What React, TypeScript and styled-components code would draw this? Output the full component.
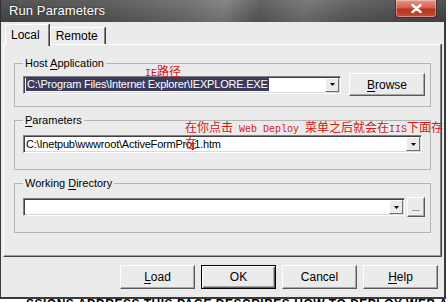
import React from "react";
import styled, { createGlobalStyle, css } from "styled-components";

const GlobalStyle = createGlobalStyle`
  html, body { margin: 0; padding: 0; background: #ffffff; }
  body { width: 448px; height: 302px; overflow: hidden; }
  * { box-sizing: border-box; }
`;

const Page = styled.div`
  position: relative;
  width: 448px;
  height: 302px;
  overflow: hidden;
  background: #ffffff;
  font-family: "Liberation Sans", Arial, sans-serif;
  font-size: 11px;
  color: #000;
`;

const Dialog = styled.div`
  width: 446px;
  height: 299px;
  display: flex;
  flex-direction: column;
`;

const TitleBar = styled.div`
  height: 22px;
  flex: none;
  display: flex;
  align-items: flex-start;
  justify-content: space-between;
  padding-left: 8px;
  padding-right: 9px;
  background:
    linear-gradient(180deg, rgba(255,255,255,0.08) 0%, rgba(0,0,0,0.1) 100%),
    linear-gradient(100deg, #474747 0%, #555 25%, #6c6c6c 42%, #7c7c7c 50%, #575757 58%, #707070 68%, #5a5a5a 78%, #4c4c4c 90%, #444 100%);
  border-left: 1px solid #2e2e2e;
`;

const TitleText = styled.span`
  font-size: 13px;
  line-height: 22px;
  color: #ffffff;
  letter-spacing: 0.1px;
  text-shadow: 0 0 2px rgba(0,0,0,0.6);
`;

const CloseButton = styled.div`
  width: 42px;
  height: 18px;
  display: flex;
  align-items: center;
  justify-content: center;
  border: 1px solid #5a2a24;
  border-top: none;
  border-radius: 0 0 4px 4px;
  background: linear-gradient(180deg, #e6968a 0%, #d4604e 45%, #b8321f 55%, #c4503a 100%);
  box-shadow: inset 0 0 0 1px rgba(255,255,255,0.35);
`;

const Body = styled.div`
  flex: 1;
  display: flex;
  flex-direction: column;
  padding: 2px 3px 0 2px;
  background: #ebebeb;
  border-left: 1px solid #3a3a3a;
  border-right: 2px solid #3a3a3a;
  border-bottom: 2px solid #3a3a3a;
`;

const TabRow = styled.div`
  height: 20px;
  display: flex;
  align-items: flex-end;
  padding-left: 2px;
`;

const Tab = styled.div<{ $active?: boolean }>`
  position: relative;
  display: flex;
  align-items: center;
  background: #ebebeb;
  font-size: 12px;
  border-top: 1px solid #ffffff;
  border-left: 1px solid #ffffff;
  border-right: 1px solid #808080;
  box-shadow: 1px 0 0 #404040;
  ${(p) =>
    p.$active
      ? css`
          z-index: 1;
          height: 22px;
          margin-bottom: -2px;
          padding: 0 8px 2px 5px;
        `
      : css`
          height: 17px;
          margin-left: 1px;
          padding: 0 6px 0 5px;
        `}
`;

const Panel = styled.div`
  height: 213px;
  display: flex;
  flex-direction: column;
  gap: 6px;
  padding: 11px 9px 0 10px;
  background: #ebebeb;
  border-top: 1px solid #ffffff;
  border-left: 1px solid #ffffff;
  border-right: 1px solid #808080;
  border-bottom: 1px solid #404040;
  box-shadow: 1px 0 0 #404040, inset 0 -1px 0 #a0a0a0;
`;

const Group = styled.fieldset<{ $top: number; $bottom: number }>`
  margin: 0;
  min-width: 0;
  padding: 0 7px ${(p) => p.$bottom}px 8px;
  border: 1px solid #b4b4b4;
  & > div {
    margin-top: ${(p) => p.$top}px;
  }
`;

const Caption = styled.legend`
  padding: 0 2px;
  line-height: 14px;
  font-size: 11px;
  color: #000;
`;

const Row = styled.div<{ $gap?: number }>`
  display: flex;
  align-items: center;
  gap: ${(p) => p.$gap ?? 8}px;
`;

const Combo = styled.div<{ $width: number }>`
  width: ${(p) => p.$width}px;
  height: 18px;
  flex: none;
  display: flex;
  align-items: stretch;
  background: #ffffff;
  border: 1px solid;
  border-color: #808080 #ffffff #ffffff #808080;
  box-shadow: inset 1px 1px 0 #404040, inset -1px -1px 0 #d8d8d8;
  padding: 1px;
`;

const ComboText = styled.div`
  flex: 1;
  display: flex;
  align-items: center;
  padding-left: 1px;
  font-size: 11px;
  letter-spacing: -0.2px;
  white-space: nowrap;
  overflow: hidden;
`;

const Selected = styled.span`
  background: #3b3b5e;
  color: #ffffff;
  line-height: 13px;
  padding: 0 1px;
`;

const ArrowButton = styled.div`
  width: 14px;
  flex: none;
  display: flex;
  align-items: center;
  justify-content: center;
  background: #ebebeb;
  border-top: 1px solid #ffffff;
  border-left: 1px solid #ffffff;
  border-right: 1px solid #707070;
  border-bottom: 1px solid #707070;
`;

const Button = styled.div<{ $w: number; $h: number; $default?: boolean }>`
  width: ${(p) => p.$w}px;
  height: ${(p) => p.$h}px;
  flex: none;
  display: flex;
  align-items: center;
  justify-content: center;
  background: #ebebeb;
  font-size: 12px;
  color: #000;
  border-top: 1px solid #ffffff;
  border-left: 1px solid #ffffff;
  border-right: 1px solid #5a5a5a;
  border-bottom: 1px solid #5a5a5a;
  box-shadow: inset -1px -1px 0 #a8a8a8;
  ${(p) =>
    p.$default &&
    css`
      border: 1px solid #000;
      box-shadow: inset 1px 1px 0 #ffffff, inset -1px -1px 0 #5a5a5a, inset -2px -2px 0 #a8a8a8;
    `}
`;

const Ellipsis = styled.span`
  font-size: 9px;
  margin-top: 2px;
`;

const Accel = styled.span`
  text-decoration: underline;
  text-underline-offset: 2px;
`;

const Footer = styled.div`
  margin-top: 8px;
  display: flex;
  justify-content: flex-end;
  gap: 6px;
  padding-right: 3px;
`;

const BottomStrip = styled.div`
  height: 3px;
  overflow: hidden;
  padding-left: 26px;
  font-family: "Liberation Sans", Arial, sans-serif;
  font-weight: bold;
  font-size: 12px;
  line-height: 12px;
  white-space: nowrap;
  color: #000;
  letter-spacing: 0.5px;
`;

const BottomInner = styled.div`
  margin-top: -1px;
`;

const Note = styled.div<{ $left: number; $top: number; $width?: number }>`
  position: absolute;
  left: ${(p) => p.$left}px;
  top: ${(p) => p.$top}px;
  ${(p) => (p.$width ? `width: ${p.$width}px;` : "white-space: nowrap;")}
  font-family: "Noto Sans CJK SC", "Noto Sans CJK JP", sans-serif;
  font-size: 12px;
  line-height: 13px;
  color: #d41616;
`;

const Mono = styled.span`
  font-family: "Liberation Mono", "Courier New", monospace;
  font-size: 10px;
`;

const Arrow = () => (
  <svg width="5" height="3" viewBox="0 0 5 3">
    <path d="M0 0h5L2.5 3z" fill="#000" />
  </svg>
);

export default function App() {
  return (
    <>
      <GlobalStyle />
      <Page>
        <Dialog>
          <TitleBar>
            <TitleText>Run Parameters</TitleText>
            <CloseButton>
              <svg width="11" height="9" viewBox="0 0 11 9">
                <path d="M1.5 1l8 7M9.5 1l-8 7" stroke="#fff" strokeWidth="2.4" strokeLinecap="round" />
              </svg>
            </CloseButton>
          </TitleBar>
          <Body>
            <TabRow>
              <Tab $active>Local</Tab>
              <Tab>Remote</Tab>
            </TabRow>
            <Panel>
              <Group $top={3} $bottom={10}>
                <Caption>
                  Host <Accel>A</Accel>pplication
                </Caption>
                <Row>
                  <Combo $width={318}>
                    <ComboText>
                      <Selected>C:\Program Files\Internet Explorer\IEXPLORE.EXE</Selected>
                    </ComboText>
                    <ArrowButton>
                      <Arrow />
                    </ArrowButton>
                  </Combo>
                  <Button $w={76} $h={23}>
                    <span>
                      <Accel>B</Accel>rowse
                    </span>
                  </Button>
                </Row>
              </Group>
              <Group $top={8} $bottom={16}>
                <Caption>
                  <Accel>P</Accel>arameters
                </Caption>
                <Row>
                  <Combo $width={399}>
                    <ComboText>C:\Inetpub\wwwroot\ActiveFormProj1.htm</ComboText>
                    <ArrowButton>
                      <Arrow />
                    </ArrowButton>
                  </Combo>
                </Row>
              </Group>
              <Group $top={7} $bottom={15}>
                <Caption>
                  Working <Accel>D</Accel>irectory
                </Caption>
                <Row $gap={2}>
                  <Combo $width={382}>
                    <ComboText />
                    <ArrowButton>
                      <Arrow />
                    </ArrowButton>
                  </Combo>
                  <Button $w={18} $h={20}>
                    <Ellipsis>...</Ellipsis>
                  </Button>
                </Row>
              </Group>
            </Panel>
            <Footer>
              <Button $w={75} $h={24}>
                <span>
                  <Accel>L</Accel>oad
                </span>
              </Button>
              <Button $w={75} $h={24} $default>
                OK
              </Button>
              <Button $w={75} $h={24}>
                Cancel
              </Button>
              <Button $w={75} $h={24}>
                <span>
                  <Accel>H</Accel>elp
                </span>
              </Button>
            </Footer>
          </Body>
        </Dialog>
        <BottomStrip>
          <BottomInner>SSIONS ADDRESS  THIS PAGE DESCRIBES HOW TO DEPLOY WEB APPLICATION PROJECTS</BottomInner>
        </BottomStrip>
        <Note $left={145} $top={64}>
          <Mono>IE</Mono>路径
        </Note>
        <Note $left={185} $top={120} $width={263}>
          在你点击<Mono> Web Deploy </Mono>菜单之后就会在<Mono>IIS</Mono>下面存在
        </Note>
      </Page>
    </>
  );
}
